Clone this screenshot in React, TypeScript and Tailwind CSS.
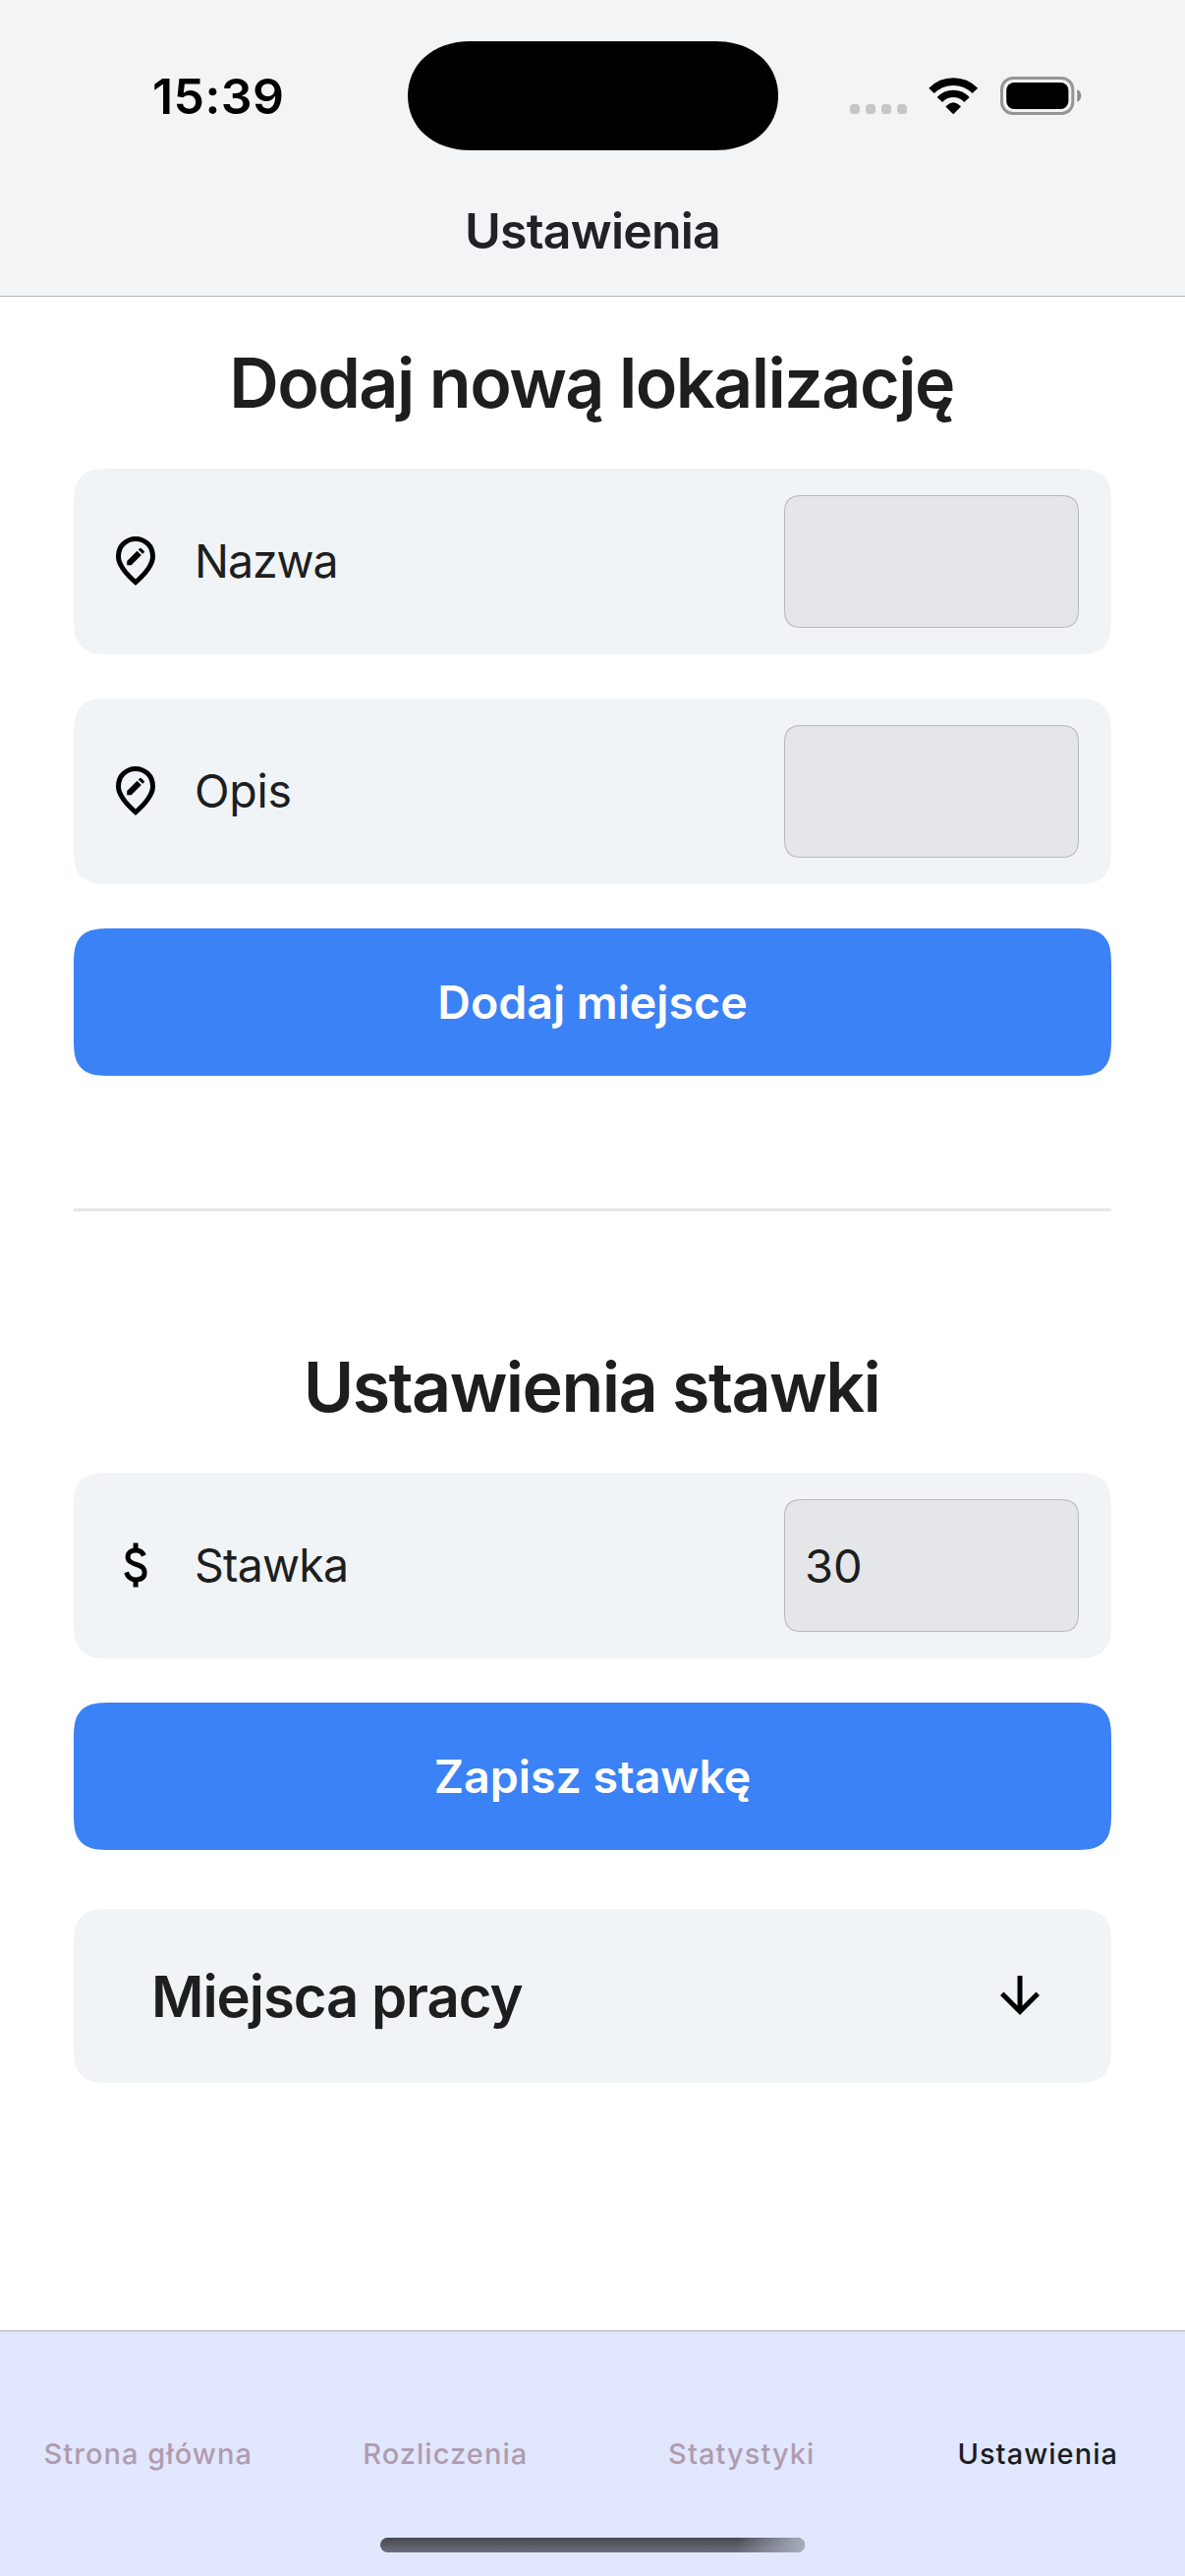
import type { ReactNode } from "react";

function DynamicIsland() {
  return (
    <svg width="377" height="111" viewBox="0 0 377 111" className="shrink-0">
      <path d="M64 0H313C352 0 377 24 377 55.5S352 111 313 111H64C25 111 0 87 0 55.5S25 0 64 0Z" fill="#000" />
    </svg>
  );
}

function WifiIcon() {
  return (
    <svg width="51" height="38" viewBox="0 0 51 38" fill="none">
      <path d="M3 13.4A31.1 31.1 0 0 1 47.4 13.4" stroke="#000" strokeWidth="7.7" />
      <path d="M11.4 22.5A18.6 18.6 0 0 1 39 22.5" stroke="#000" strokeWidth="7.4" />
      <path d="M17.9 30.1Q17.2 29.4 18 28.7Q25.2 21.6 32.4 28.7Q33.2 29.4 32.5 30.1L25.8 36.7Q25.2 37.3 24.6 36.7Z" fill="#000" />
    </svg>
  );
}

function BatteryIcon() {
  return (
    <svg width="83" height="39" viewBox="0 0 83 39" fill="none">
      <rect x="1.5" y="1.5" width="72.3" height="36" rx="11.5" stroke="#949597" strokeWidth="3" />
      <rect x="6.2" y="6" width="63.2" height="27" rx="8" fill="#000" />
      <path d="M78.3 13.3C80.8 14.3 82.3 16.6 82.3 19.5S80.8 24.7 78.3 25.7Z" fill="#88898b" />
    </svg>
  );
}

function SymbolIcon({ children }: { children: ReactNode }) {
  return (
    <svg width="60" height="60" viewBox="0 -960 960 960" fill="#000" className="mb-px shrink-0">
      {children}
    </svg>
  );
}

function EditLocationIcon() {
  return (
    <SymbolIcon>
      <path d="M480-80Q319-217 239.5-334.5T160-552q0-150 96.5-239T480-880q127 0 223.5 89T800-552q0 100-79.5 217.5T480-80Zm0-106q122-112 181-203.5T720-552q0-109-69.5-178.5T480-800q-101 0-170.5 69.5T240-552q0 71 59 162.5T480-186Z" />
      <path d="M340-412v-70l164-164 70 70-164 164h-70Zm254-184-70-70 22-20q7-6 14-6t14 6l42 42q6 7 6 14t-6 14l-22 20Z" />
    </SymbolIcon>
  );
}

function DollarIcon() {
  return (
    <SymbolIcon>
      <path d="M441-120v-86q-53-12-91.5-46T293-348l74-30q15 48 44.5 73t77.5 25q41 0 69.5-18.5T587-356q0-35-22-55.5T463-458q-86-27-118-64.5T313-614q0-65 42-101t86-41v-84h80v84q50 8 82.5 36.5T651-650l-74 32q-12-32-34-48t-60-16q-44 0-67 19.5T393-614q0 33 30 52t104 40q69 20 104.5 63.5T667-358q0 71-42 108t-104 46v84h-80Z" />
    </SymbolIcon>
  );
}

function ArrowDownIcon() {
  return (
    <SymbolIcon>
      <path d="M440-800v487L216-537l-56 57 320 320 320-320-56-57-224 224v-487h-80Z" />
    </SymbolIcon>
  );
}

function FieldRow({ icon, label, value }: { icon: ReactNode; label: ReactNode; value?: string }) {
  return (
    <div className="flex h-[189px] items-center rounded-[38px] bg-[#f0f4f7] pr-[33px] pl-[33px] [corner-shape:superellipse(1.6)]">
      {icon}
      <div className="flex-1 pb-[2px] pl-[30px] text-[46.5px] leading-[60px] text-[#1e1e1e]">{label}</div>
      <div className="flex h-[135px] w-[300px] items-center rounded-[21px] border border-[#b7b8bb] bg-[#e5e6ea] pt-px pl-[20px] text-[47px] leading-[60px] text-[#1e1e1e] [corner-shape:superellipse(1.6)]">
        {value}
      </div>
    </div>
  );
}

function PrimaryButton({ children }: { children: ReactNode }) {
  return (
    <button className="flex h-[150px] w-full items-center justify-center rounded-[38px] bg-[#3b82f6] text-[46.5px] leading-[60px] font-semibold text-white [corner-shape:superellipse(1.6)]">
      {children}
    </button>
  );
}

export default function App() {
  return (
    <div className="flex h-[2622px] w-[1206px] flex-col overflow-hidden bg-white font-['Inter',sans-serif]">
      <header className="flex h-[302px] flex-col border-b border-[#b3b4b6] bg-[#f3f4f6]">
        <div className="flex h-[194px] items-center">
          <div className="w-[414.5px] pt-[2px] pl-[155px] text-[50px] leading-[60px] font-semibold tracking-[0.4px] text-black">15:39</div>
          <DynamicIsland />
          <div className="flex items-center pt-px pl-[73.5px]">
            <div className="mt-[27px] flex gap-[6px]">
              <span className="size-[10px] rounded-[3.5px] bg-[#c5c6c8]" />
              <span className="size-[10px] rounded-[3.5px] bg-[#c5c6c8]" />
              <span className="size-[10px] rounded-[3.5px] bg-[#c5c6c8]" />
              <span className="size-[10px] rounded-[3.5px] bg-[#c5c6c8]" />
            </div>
            <div className="ml-[22px]">
              <WifiIcon />
            </div>
            <div className="ml-[22px]">
              <BatteryIcon />
            </div>
          </div>
        </div>
        <h1 className="text-center text-[50px] leading-[82px] font-semibold tracking-[-0.8px] text-[#212225]">Ustawienia</h1>
      </header>

      <main className="flex flex-1 flex-col px-[75px]">
        <h2 className="mt-[47px] pr-[2px] text-center text-[70px] leading-[82px] font-semibold tracking-[-1.55px] text-[#1e1e1e]">
          Dodaj nową lokalizację
        </h2>
        <div className="mt-[46px] flex flex-col gap-[45px]">
          <FieldRow icon={<EditLocationIcon />} label={<span className="tracking-[-1.1px]">Nazwa</span>} />
          <FieldRow icon={<EditLocationIcon />} label={<span className="tracking-[-0.3px]">Opis</span>} />
          <PrimaryButton>Dodaj miejsce</PrimaryButton>
        </div>
        <hr className="mt-[135px] border-t-[3px] border-[#e6e6eb]" />
        <h2 className="mt-[138px] pr-[2px] text-center text-[70px] leading-[82px] font-semibold tracking-[-1.58px] text-[#1e1e1e]">
          Ustawienia stawki
        </h2>
        <div className="mt-[46px] flex flex-col gap-[45px]">
          <FieldRow icon={<DollarIcon />} label={<span className="tracking-[-0.8px]">Stawka</span>} value="30" />
          <PrimaryButton>Zapisz stawkę</PrimaryButton>
        </div>
        <div className="mt-[60px] flex h-[177px] items-center justify-between rounded-[38px] bg-[#f0f4f7] pr-[63px] pl-[79px] [corner-shape:superellipse(1.6)]">
          <h3 className="text-[58px] leading-[70px] font-semibold tracking-[-1.05px] text-[#1e1e1e]">Miejsca pracy</h3>
          <ArrowDownIcon />
        </div>
      </main>

      <nav className="flex h-[250px] flex-col items-center border-t border-[#b0b1b6] bg-[#e0e7ff]">
        <div className="grid w-full grid-cols-4 pt-[104px] text-center text-[29px] leading-[41px] font-medium tracking-[1.05px] text-[#b09cae]">
          <span>Strona główna</span>
          <span className="pl-[2px]">Rozliczenia</span>
          <span className="pl-[2px]">Statystyki</span>
          <span className="pl-[2px] text-[#1c1d22]">Ustawienia</span>
        </div>
        <div className="mt-[65px] h-[15px] w-[432px] overflow-hidden rounded-full bg-linear-to-b from-[#454852] to-[#6e6f7a]">
          <div className="ml-auto h-full w-[70px] bg-linear-to-r from-transparent to-[#a9aebf]" />
        </div>
      </nav>
    </div>
  );
}
